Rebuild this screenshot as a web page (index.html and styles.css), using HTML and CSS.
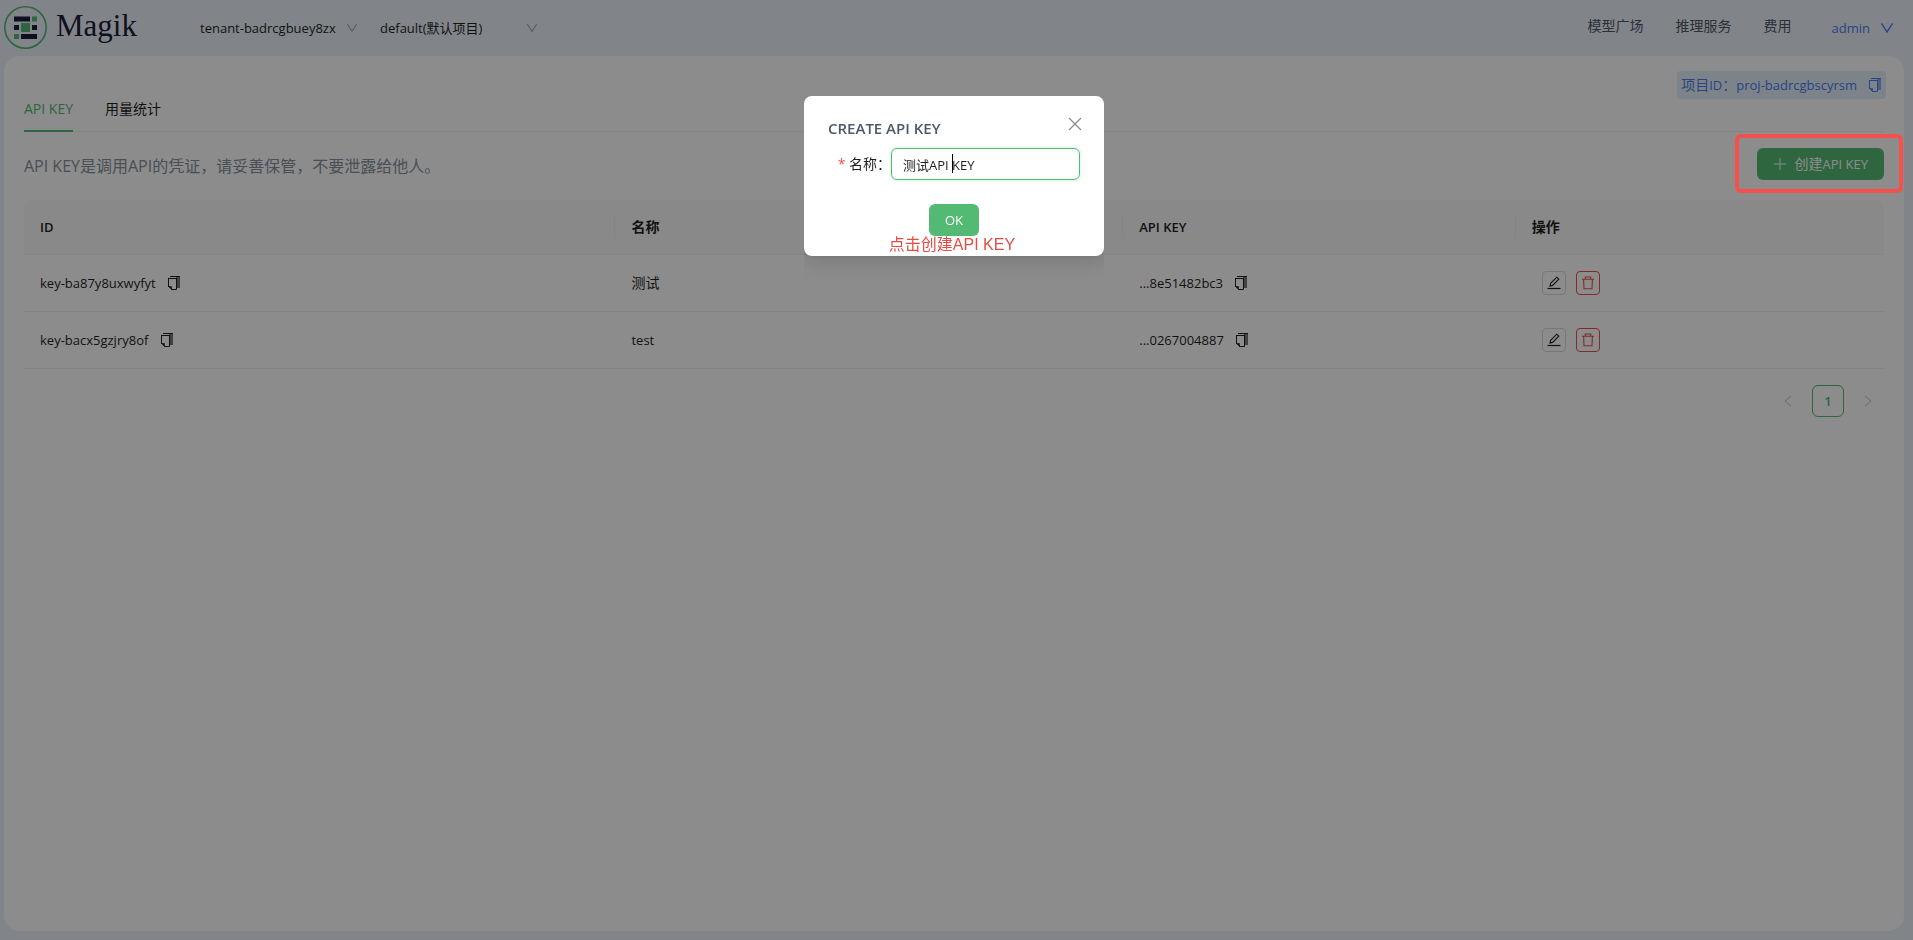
FILE: index.html
```
<!DOCTYPE html>
<html lang="zh-CN">
<head>
    <meta charset="UTF-8">
    <title>Magik</title>
    <meta name="viewport" content="width=device-width, initial-scale=1.0">
    <link rel="stylesheet" href="styles.css">
</head>
<body>

<!-- shared icons -->
<svg class="sprite" aria-hidden="true">
    <symbol id="icon-down" viewBox="0 0 12 12">
        <path d="M1.2 2 L6 9.4 L10.8 2" fill="none" stroke="currentColor" stroke-width="1.1"/>
    </symbol>
    <symbol id="icon-copy" viewBox="0 0 14 14">
        <rect x="9" y="1" width="4" height="11" fill="currentColor" opacity="0.6"/>
        <path d="M3 0.5 H13" fill="none" stroke="currentColor"/>
        <path d="M1.5 2.5 H9.5 M1.5 2 V11 M4 13.5 H9.5 M9.5 2 V13.5" fill="none" stroke="currentColor"/>
        <path d="M1.5 10.5 H4.5 V13.5 L1.5 10.5" fill="currentColor" stroke="currentColor" stroke-width="0.6"/>
    </symbol>
    <symbol id="icon-edit" viewBox="0 0 14 14">
        <path d="M3 10 L3.6 7.3 L9.8 1.2 L11.8 3.2 L5.6 9.4 Z" fill="none" stroke="currentColor" stroke-width="1.1"/>
        <path d="M0.5 12.5 H13.5" stroke="currentColor" stroke-width="1.2"/>
    </symbol>
    <symbol id="icon-delete" viewBox="0 0 14 14">
        <path d="M1 3.3 H13 M4.3 3 V1 H9.7 V3 M2.6 3.3 L3 12.8 H11 L11.4 3.3" fill="none" stroke="currentColor" stroke-width="1.1"/>
    </symbol>
</svg>

<div class="page">
    <header class="header">
        <a class="logo" href="#">
            <svg width="44" height="44" viewBox="0 0 44 44" aria-hidden="true">
                <circle cx="21.5" cy="21.5" r="20.7" fill="none" stroke="#53ba73" stroke-width="1.6"/>
                <g fill="#1c1c38">
                    <rect x="10" y="10.5" width="16" height="5"/>
                    <rect x="10" y="19" width="5" height="5"/>
                    <rect x="28" y="19" width="5" height="5"/>
                    <rect x="17" y="28" width="16" height="5"/>
                </g>
                <g fill="#53ba73">
                    <rect x="28" y="10.5" width="5" height="5"/>
                    <rect x="17" y="17" width="9" height="9"/>
                    <rect x="10" y="28" width="5" height="5"/>
                </g>
            </svg>
            <span class="logo-text">Magik</span>
        </a>
        <div class="pickers">
            <div class="picker">
                <select aria-label="租户"><option>tenant-badrcgbuey8zx</option></select>
                <svg class="picker-arrow"><use href="#icon-down"/></svg>
            </div>
            <div class="picker">
                <select aria-label="项目"><option>default(默认项目)</option></select>
                <svg class="picker-arrow"><use href="#icon-down"/></svg>
            </div>
        </div>
        <nav class="nav">
            <a href="#">模型广场</a>
            <a href="#">推理服务</a>
            <a href="#">费用</a>
        </nav>
        <button class="user">admin <svg width="14" height="14"><use href="#icon-down"/></svg></button>
    </header>

    <main class="content">
        <div class="project">
            <span><span class="zh">项目</span>ID<span class="zh">：</span>proj-badrcgbscyrsm</span>
            <button class="copy" aria-label="复制"><svg width="14" height="14"><use href="#icon-copy"/></svg></button>
        </div>
        <div class="tabs">
            <a class="tab active" href="#">API KEY</a>
            <a class="tab" href="#">用量统计</a>
        </div>
        <div class="toolbar">
            <p class="tip">API KEY是调用API的凭证，请妥善保管，不要泄露给他人。</p>
            <button class="btn">
                <svg width="14" height="14" viewBox="0 0 14 14" aria-hidden="true"><path d="M7 1 V13 M1 7 H13" stroke="currentColor"/></svg>
                <span><span class="zh">创建</span>API KEY</span>
            </button>
        </div>
        <table class="keys">
            <thead>
                <tr><th class="col-id">ID</th><th class="col-name zh">名称</th><th class="col-key">API KEY</th><th class="zh">操作</th></tr>
            </thead>
            <tbody>
                <tr>
                    <td>key-ba87y8uxwyfyt <button class="copy" aria-label="复制"><svg width="14" height="14"><use href="#icon-copy"/></svg></button></td>
                    <td class="zh">测试</td>
                    <td>...8e51482bc3 <button class="copy" aria-label="复制"><svg width="14" height="14"><use href="#icon-copy"/></svg></button></td>
                    <td>
                        <div class="actions">
                            <button class="icon-btn" aria-label="编辑"><svg width="14" height="14"><use href="#icon-edit"/></svg></button>
                            <button class="icon-btn danger" aria-label="删除"><svg width="14" height="14"><use href="#icon-delete"/></svg></button>
                        </div>
                    </td>
                </tr>
                <tr>
                    <td>key-bacx5gzjry8of <button class="copy" aria-label="复制"><svg width="14" height="14"><use href="#icon-copy"/></svg></button></td>
                    <td>test</td>
                    <td>...0267004887 <button class="copy" aria-label="复制"><svg width="14" height="14"><use href="#icon-copy"/></svg></button></td>
                    <td>
                        <div class="actions">
                            <button class="icon-btn" aria-label="编辑"><svg width="14" height="14"><use href="#icon-edit"/></svg></button>
                            <button class="icon-btn danger" aria-label="删除"><svg width="14" height="14"><use href="#icon-delete"/></svg></button>
                        </div>
                    </td>
                </tr>
            </tbody>
        </table>
        <div class="pagination">
            <button class="page-btn" aria-label="上一页"><svg width="12" height="12" viewBox="0 0 12 12"><path d="M9 1 L3 6 L9 11" fill="none" stroke="currentColor"/></svg></button>
            <button class="page-btn current">1</button>
            <button class="page-btn" aria-label="下一页"><svg width="12" height="12" viewBox="0 0 12 12"><path d="M3 1 L9 6 L3 11" fill="none" stroke="currentColor"/></svg></button>
        </div>
    </main>
</div>

<div class="mask">
    <div class="modal-wrap">
        <form class="modal" role="dialog" aria-labelledby="modalTitle">
            <div class="modal-header">
                <h2 id="modalTitle">CREATE API KEY</h2>
                <button type="button" class="close" aria-label="关闭"><svg width="14" height="14" viewBox="0 0 14 14"><path d="M1 1 L13 13 M13 1 L1 13" stroke="currentColor" stroke-width="1.3"/></svg></button>
            </div>
            <div class="field">
                <label for="keyName" class="zh"><span class="required">*</span> 名称：</label>
                <div class="input-box">
                    <input type="text" id="keyName" value="测试API KEY">
                    <span class="caret"></span>
                </div>
            </div>
            <button type="button" class="btn ok">OK</button>
            <div class="note">点击创建API KEY</div>
        </form>
    </div>
</div>
<div class="highlight"></div>

</body>
</html>
```
FILE: styles.css
```
* {
    box-sizing: border-box;
}
body {
    margin: 0;
    font-family: "Open Sans", "Noto Sans CJK SC", sans-serif;
    font-size: 13px;
    line-height: 22px;
    color: #1f1f1f;
}
a {
    color: inherit;
    text-decoration: none;
}
button, input, select {
    font: inherit;
    color: inherit;
}
button {
    display: inline-flex;
    align-items: center;
    justify-content: center;
    padding: 0;
    border: 0;
    background: none;
    cursor: pointer;
}
.zh {
    font-size: 14px;
}
.sprite {
    position: absolute;
    width: 0;
    height: 0;
}
.page {
    display: flex;
    flex-direction: column;
    min-height: 100vh;
    padding: 0 9px 9px 4px;
    background-color: #ecf2f9;
}

/* header */
.header {
    display: flex;
    align-items: center;
    height: 56px;
    padding-right: 10px;
}
.logo {
    display: flex;
    align-items: center;
    gap: 8px;
    width: 185px;
}
.logo-text {
    padding-bottom: 4px;
    font-family: "Liberation Serif", serif;
    font-size: 31px;
    line-height: 40px;
    color: #1c1c38;
}
.pickers {
    display: flex;
    flex: 1;
}
.picker {
    position: relative;
    width: 180px;
}
.picker select {
    width: 100%;
    height: 32px;
    padding: 0 11px;
    border: 0;
    background: none;
    appearance: none;
}
.picker-arrow {
    position: absolute;
    right: 11px;
    top: 10px;
    width: 12px;
    height: 12px;
    color: #a6a9ae;
    pointer-events: none;
}
.nav {
    display: flex;
    gap: 32px;
    padding-bottom: 4px;
    font-size: 14px;
    color: #4e5969;
}
.user {
    gap: 10px;
    margin-left: 40px;
    color: #4b7bf0;
}

/* content */
.content {
    flex: 1;
    padding: 15px 20px;
    border-radius: 16px;
    background-color: #fff;
}
.project {
    display: flex;
    align-items: center;
    gap: 11px;
    width: max-content;
    height: 28px;
    margin: 0 -2px 0 auto;
    padding: 0 4px;
    border-radius: 4px;
    background-color: #e2f0fb;
    color: #4b7bf0;
}
.tabs {
    display: flex;
    gap: 32px;
    border-bottom: 1px solid #f0f0f0;
}
.tab {
    margin-bottom: -1px;
    padding-bottom: 11px;
    font-size: 14px;
    line-height: 20px;
}
.tab.active {
    border-bottom: 2px solid #53ba73;
    color: #53ba73;
}
.toolbar {
    display: flex;
    align-items: center;
    justify-content: space-between;
    margin: 16px 0 20px;
}
.tip {
    margin: 0;
    padding-top: 4px;
    font-size: 16px;
    color: #86909c;
}
.btn {
    gap: 8px;
    height: 32px;
    padding: 0 16px;
    border-radius: 6px;
    background-color: #53ba73;
    color: #fff;
}
.keys {
    width: 100%;
    table-layout: fixed;
    border-spacing: 0;
    text-align: left;
}
.keys th {
    position: relative;
    height: 55px;
    padding: 0 16px;
    border-bottom: 1px solid #f0f0f0;
    background-color: #fafafa;
    font-weight: 600;
}
.keys th:first-child {
    border-top-left-radius: 8px;
}
.keys th:last-child {
    border-top-right-radius: 8px;
}
.keys th:not(:last-child)::after {
    content: "";
    position: absolute;
    top: 16px;
    right: 0;
    width: 1px;
    height: 22px;
    background-color: #f0f0f0;
}
.keys td {
    height: 57px;
    padding: 0 16px;
    border-bottom: 1px solid #f0f0f0;
}
.keys .copy {
    margin-left: 8px;
    vertical-align: -2px;
}
.col-id {
    width: 31.8%;
}
.col-name {
    width: 27.3%;
}
.col-key {
    width: 21.1%;
}
.actions {
    display: flex;
    gap: 10px;
    padding-left: 10px;
}
.icon-btn {
    width: 24px;
    height: 24px;
    border: 1px solid #d9d9d9;
    border-radius: 4px;
}
.icon-btn.danger {
    border-color: #e8504c;
    color: #e8504c;
}
.pagination {
    display: flex;
    justify-content: flex-end;
    gap: 8px;
    margin-top: 16px;
}
.page-btn {
    width: 32px;
    height: 32px;
    border-radius: 6px;
    color: #bfbfbf;
}
.page-btn.current {
    border: 1px solid #53ba73;
    color: #53ba73;
    font-weight: 600;
}

/* create dialog */
.mask {
    position: fixed;
    inset: 0;
    padding: 96px 5px 0 0;
    background-color: rgba(0, 0, 0, 0.45);
}
.modal-wrap {
    width: 300px;
    margin: 0 auto;
    padding-bottom: 24px;
    overflow: hidden;
}
.modal {
    position: relative;
    height: 160px;
    padding: 20px 24px;
    border-radius: 8px;
    background-color: #fff;
    box-shadow: 0 6px 16px rgba(0, 0, 0, 0.08), 0 9px 28px 8px rgba(0, 0, 0, 0.05), 0 3px 6px -4px rgba(0, 0, 0, 0.12);
}
.modal-header {
    display: flex;
    justify-content: space-between;
    height: 32px;
}
.modal h2 {
    margin: 0;
    font-size: 15px;
    line-height: 24px;
    font-weight: 600;
    color: #4e5969;
}
.close {
    width: 22px;
    height: 22px;
    margin: -3px -6px 0 0;
    color: #8c8c8c;
}
.field {
    display: flex;
    align-items: center;
    justify-content: flex-end;
}
.required {
    color: #ff4d4f;
}
.input-box {
    position: relative;
    width: 189px;
}
.input-box input {
    display: block;
    width: 100%;
    height: 32px;
    padding: 0 11px;
    border: 1px solid #53ba73;
    border-radius: 6px;
    outline: 0;
    box-shadow: 0 0 0 2px rgba(83, 186, 115, 0.1);
}
.caret {
    position: absolute;
    left: 61px;
    top: 6px;
    width: 1px;
    height: 19px;
    background-color: #000;
}
.ok {
    display: flex;
    margin: 24px auto 0;
}
.note {
    position: absolute;
    left: 0;
    right: 4px;
    bottom: 0;
    font-family: "Liberation Sans", "Noto Sans CJK SC", sans-serif;
    font-size: 16px;
    text-align: center;
    color: #e04f46;
}
.highlight {
    position: absolute;
    top: 134px;
    right: 10px;
    width: 168px;
    height: 59px;
    border: 4px solid #f5504b;
    border-radius: 6px;
    pointer-events: none;
}
```
